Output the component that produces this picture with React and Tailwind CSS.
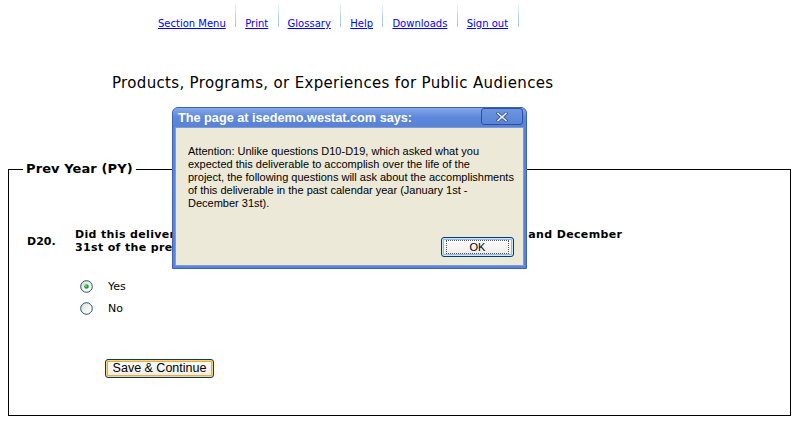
const navItems = ['Section Menu', 'Print', 'Glossary', 'Help', 'Downloads', 'Sign out'];

const dialogLines = [
  'Attention: Unlike questions D10-D19, which asked what you',
  'expected this deliverable to accomplish over the life of the',
  'project, the following questions will ask about the accomplishments',
  'of this deliverable in the past calendar year (January 1st -',
  'December 31st).',
];

function Radio({ checked }) {
  return (
    <svg width="13" height="13" viewBox="0 0 13 13" className="shrink-0">
      <defs>
        <linearGradient id={checked ? 'rg1' : 'rg2'} x1="0" y1="0" x2="1" y2="1">
          <stop offset="0" stopColor="#dcdcd5" />
          <stop offset="0.6" stopColor="#f6f6f3" />
          <stop offset="1" stopColor="#ffffff" />
        </linearGradient>
      </defs>
      <circle cx="6.5" cy="6.5" r="5.8" fill={`url(#${checked ? 'rg1' : 'rg2'})`} stroke="#1c5180" strokeWidth="1" />
      {checked && <circle cx="6.5" cy="6.5" r="2.3" fill="#21a121" />}
      {checked && <circle cx="6" cy="6" r="0.9" fill="#7fe07f" />}
    </svg>
  );
}

export default function App() {
  return (
    <div className="relative w-[802px] h-[436px] overflow-hidden bg-white text-black font-['DejaVu_Sans',Verdana,sans-serif]">
      {/* top links */}
      <nav className="flex items-start h-[30px] pl-[149px] pt-[3px]">
        {navItems.map((item) => (
          <div key={item} className="flex items-start">
            <a href="#" className="pl-[9px] pr-[9.4px] pt-[15px] text-[10px] leading-[12px] text-[#0000ff] underline">
              {item}
            </a>
            <span className="w-px h-[24px] bg-gradient-to-b from-[#f4f9fd] via-[#bcd6ee] to-[#9ec4e6]" />
          </div>
        ))}
      </nav>

      <h1 className="mt-[44px] pl-[112px] text-[15px] leading-[18px] tracking-[0.33px] font-normal">
        Products, Programs, or Experiences for Public Audiences
      </h1>

      <fieldset className="mt-[69px] ml-[8px] w-[783px] border border-black pl-[14px] pr-[10px] pb-[36px]">
        <legend className="px-[3px] text-[13px] leading-[16px] tracking-[0.1px] font-bold">Prev Year (PY)</legend>
        <div className="pl-[4px]">
          <div className="mt-[51px] grid grid-cols-[48px_1fr] items-center text-[11px] leading-[13px] tracking-[0.35px] font-bold">
            <span className="tracking-normal">D20.</span>
            <span>
              Did this deliverable have any activity or output between January 1st and December
              <br />
              31st of the previous year?
            </span>
          </div>

          <div className="mt-[21px] ml-[53px] flex flex-col text-[11px] leading-[13px]">
            <label className="flex items-center h-[22px] gap-[15px]">
              <Radio checked />
              <span>Yes</span>
            </label>
            <label className="flex items-center h-[22px] gap-[15px]">
              <Radio />
              <span>No</span>
            </label>
          </div>

          <button className="mt-[40px] ml-[78px] h-[19px] w-[109px] rounded-[3px] border border-[#003c74] bg-gradient-to-b from-[#ffffff] to-[#ecebe6] shadow-[inset_0_0_0_1px_#fbd77a,inset_0_0_0_2px_#f3a73a] text-[12.5px] leading-[15px] font-['Liberation_Sans',Arial,sans-serif] text-black">
            Save &amp; Continue
          </button>
        </div>
      </fieldset>

      {/* alert dialog */}
      <div className="absolute left-[172px] top-[107px] w-[355px] h-[162px] flex flex-col rounded-t-[6px] border border-[#3d62bd] bg-[#5a84d8] px-[2px] pb-[2px] font-['Liberation_Sans',Tahoma,Arial,sans-serif]">
        <div className="flex items-start h-[19px] -mx-[2px] pl-[5px] pr-[3px] rounded-t-[5px] bg-gradient-to-b from-[#86a8ea] via-[#5d87da] to-[#5882d6]">
          <span className="pt-[3px] text-[12.7px] leading-[15px] font-bold text-white">
            The page at isedemo.westat.com says:
          </span>
          <div className="ml-auto flex items-center justify-center w-[42px] h-[17px] rounded-[3px] border border-[#2c4f9e] bg-gradient-to-b from-[#6e95df] to-[#5a84d8]">
            <svg width="12" height="10" viewBox="0 0 12 10">
              <path d="M2 1.5 L10 8.5 M10 1.5 L2 8.5" stroke="#3b5598" strokeWidth="3.2" strokeLinecap="square" />
              <path d="M2 1.5 L10 8.5 M10 1.5 L2 8.5" stroke="#e8eefb" strokeWidth="1.6" strokeLinecap="square" />
            </svg>
          </div>
        </div>
        <div className="flex-1 flex flex-col bg-[#ece9d8] border border-[#7f9bd6] pl-[12px] pr-[9px] pt-[17px] pb-[8px] text-[11px] leading-[13px] text-black">
          <div>
            {dialogLines.map((line) => (
              <div key={line} className="whitespace-nowrap">{line}</div>
            ))}
          </div>
          <button className="mt-auto self-end flex items-center justify-center w-[73px] h-[20px] rounded-[3px] border border-[#003c74] bg-gradient-to-b from-[#ffffff] to-[#ecebe6] shadow-[inset_0_0_0_1px_#cee7ff,inset_0_0_0_2px_#98b8ea]">
            <span className="flex items-center justify-center w-[63px] h-[14px] border border-dotted border-[#555] text-[11px] leading-[12px]">
              OK
            </span>
          </button>
        </div>
      </div>
    </div>
  );
}
